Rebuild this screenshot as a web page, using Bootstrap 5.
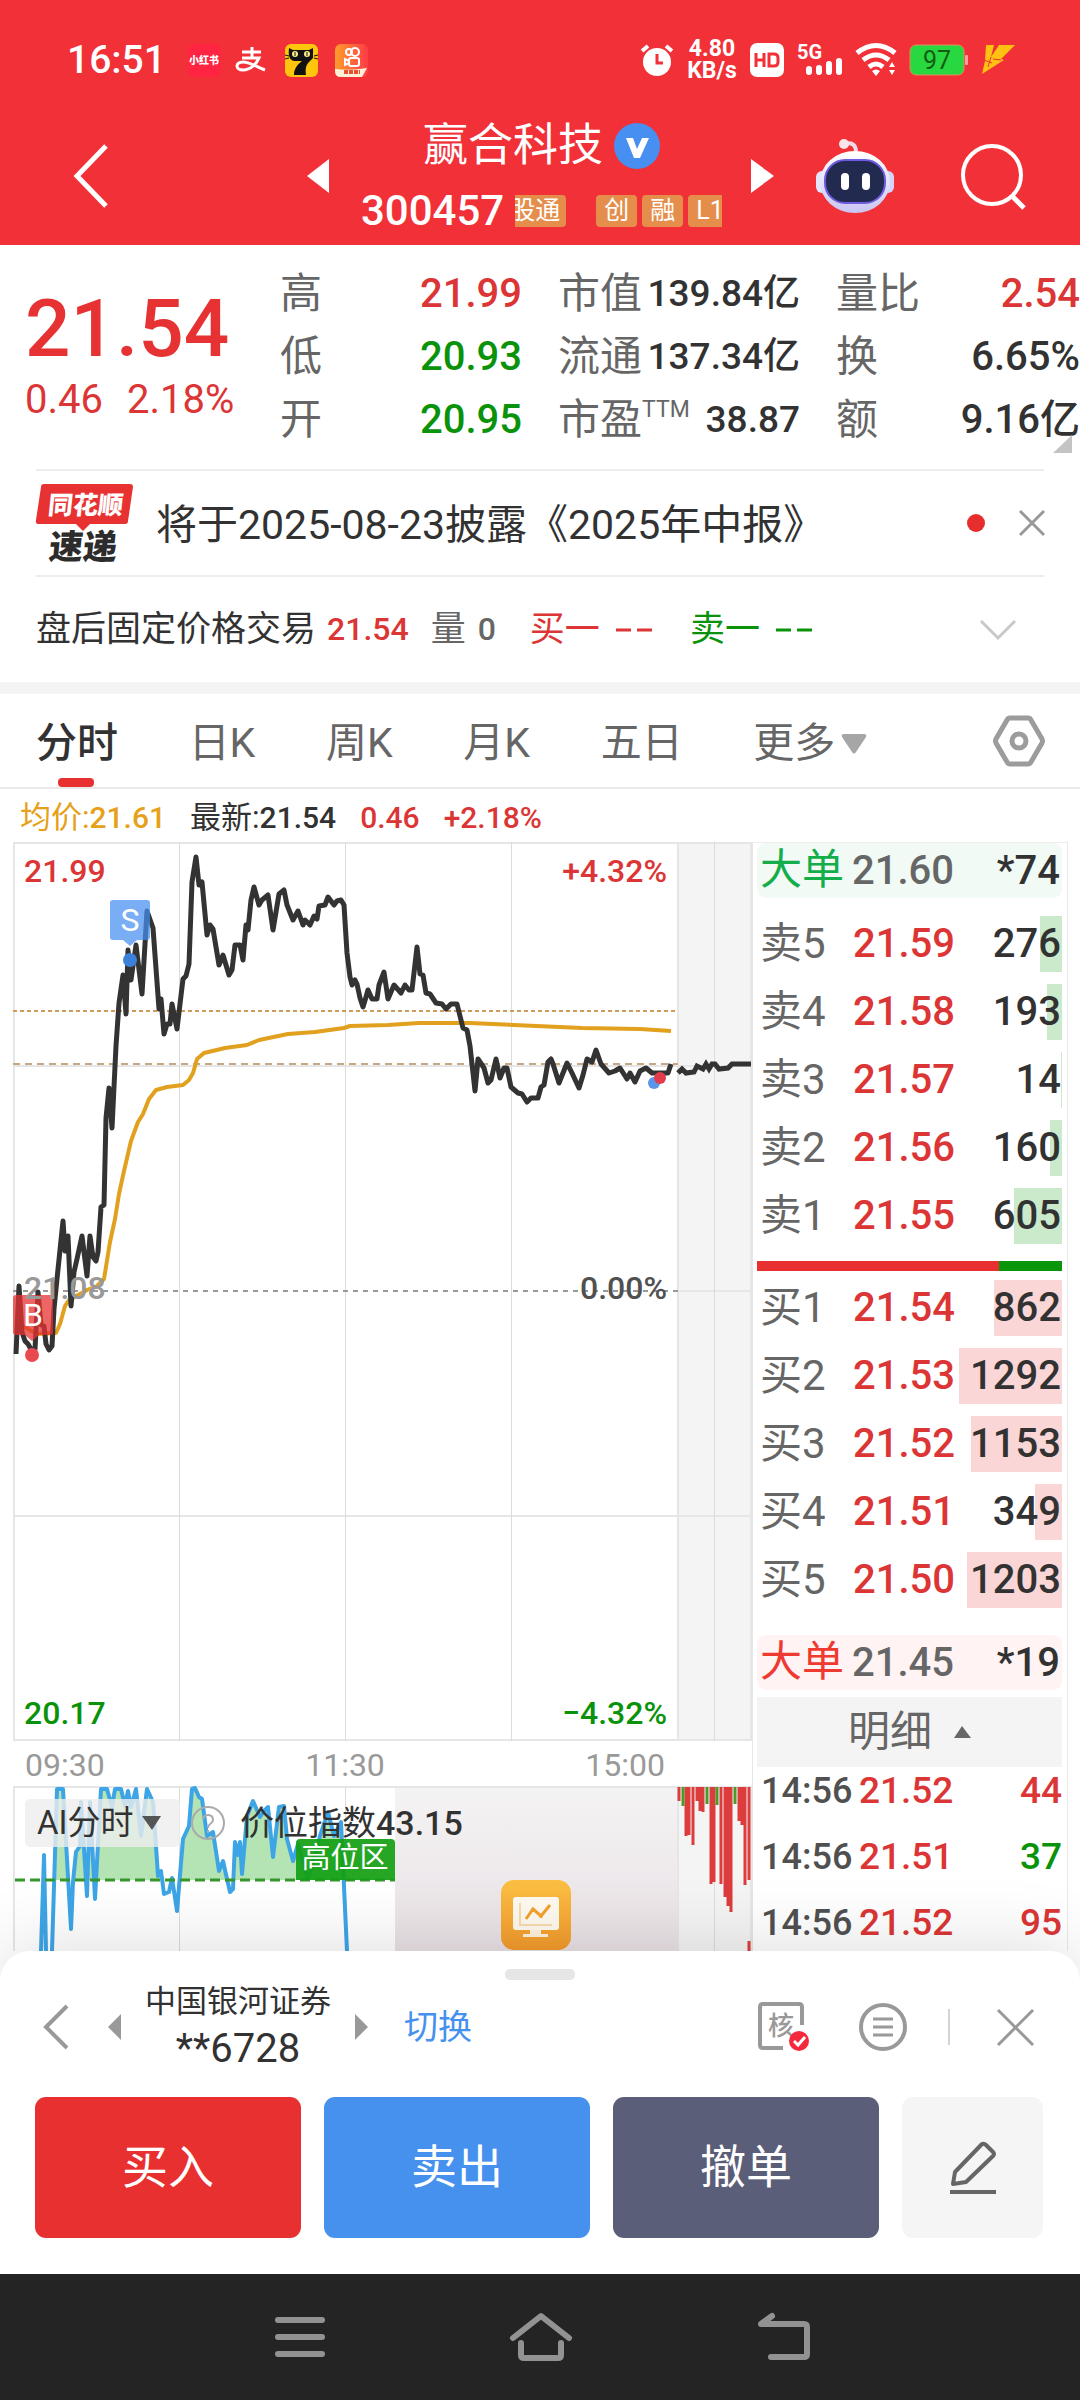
<!DOCTYPE html>
<html lang="zh-CN">
<head>
<meta charset="utf-8">
<meta name="viewport" content="width=device-width, initial-scale=1">
<title>赢合科技 300457</title>
<link href="https://cdn.jsdelivr.net/npm/bootstrap@5.3.0/dist/css/bootstrap.min.css" rel="stylesheet">
<script src="https://cdn.jsdelivr.net/npm/bootstrap@5.3.0/dist/js/bootstrap.bundle.min.js"></script>
<style>
:root{--up:#dc3535;--down:#0a930a;--ink:#323232;--soft:#666;--line:#e9e9e9}
body{font-family:Roboto,"Noto Sans CJK SC",sans-serif;color:var(--ink);background:#fff;line-height:1.2}
svg{display:block;flex:none;overflow:visible}
svg.fit{overflow:hidden}
button{border:0;background:none;padding:0;color:inherit;font:inherit;line-height:inherit}
a{text-decoration:none;color:inherit}
.up{color:var(--up)}.down{color:var(--down)}.soft{color:var(--soft)}.ink{color:var(--ink)}
.topbar{background:#f23037;color:#fff}
.status{height:116px;padding:4px 65px 0 67px;gap:13px}
.clock{font-size:39px;font-weight:500;margin-right:9px}
.rate{font-size:23px;font-weight:700;line-height:22px;text-align:center;width:50px}
.titlebar{height:129px;padding:0 53px 10px 73px}
.stock{width:361px;margin:0 29px 0 32px}
.stock h1{font-size:45px;line-height:50px;font-weight:400;margin:0;gap:11px}
.stock-code{font-size:42px;font-weight:500;line-height:40px}
.code-row{margin-top:20px}
.tags{height:32px;overflow:hidden;gap:5px;width:208px;margin-left:11px}
.tag{background:#e58e4c;border-radius:4px;font-size:25px;line-height:32px;padding:0 8px;flex:none}
.tag-cut{width:51px;overflow:hidden;direction:rtl;padding:0 6px 0 0;margin-right:25px;white-space:nowrap;border-radius:0 4px 4px 0}
.quote{height:224px;padding:24px 0 0 25px;font-size:42px}
.price{font-size:80px;font-weight:500;line-height:84px;color:#e63232;margin-top:18px}
.chg{font-size:40px;line-height:46px;gap:24px;margin-top:6px}
.qgrid{row-gap:13px;line-height:50px}
.qv{font-size:40px;font-weight:500}
.qv-s{font-size:37px;font-weight:500}
.ttm{font-size:23px;line-height:30px}
.rule{margin:0 36px;border-top:2px solid #ededed}
.news{height:104px;padding:0 35px}
.news a{font-size:41px;padding-top:6px}
.fixed-row{height:105px;padding:0 63px 0 36px;font-size:35px}
.fixed-row .num{font-size:32px;font-weight:500}
.band{height:12px;background:#f4f4f4}
.period{height:95px;border-bottom:2px solid #e9e9e9;padding:0 34px 0 36px;font-size:41px;color:var(--soft)}
.period a{padding-top:6px}
.period .cur{color:var(--ink);font-weight:500;position:relative}
.period .cur::after{content:"";position:absolute;left:22px;bottom:-19px;width:36px;height:9px;border-radius:4px;background:#e83030}
.legend-row{height:53px;padding:4px 20px 0;font-size:31px;gap:24px}
.legend-row b{font-weight:500;font-size:30px}
.market{padding-bottom:30px}
.plot{flex:0 0 752px;flex-basis:69.63%;padding-left:13px}
.plot svg.fit{width:100%;height:auto}
.axis{height:45px;padding:4px 87px 0 12px;font-size:32px;color:#999}
.index-bar{position:absolute;left:12px;top:13px;gap:11px}
.ai{background:rgba(238,238,238,.8);border-radius:5px;height:48px;padding:0 12px;font-size:33px;gap:8px;width:155px}
.idx{font-size:34px;margin-left:4px}
.idx b{font-weight:500}
.book{border-left:1px solid #e6e6e6;border-right:1px solid #e9e9e9;border-top:1px solid #eee;padding:0 5px 0 4px;margin-right:12px;font-size:42px}
.big{height:55px;border-radius:9px;padding:0 2px 0 3px}
.n{font-size:40px;font-weight:500}
.book table{width:100%;table-layout:fixed}
.book tr.lv{height:68px;background:linear-gradient(to left,var(--c) var(--w),transparent 0) center/100% 56px no-repeat}
.book th{font-weight:400;color:var(--soft);width:95px;padding:0 0 0 3px}
.book td,.book th{line-height:50px}
.book .pr{width:105px}
.asks{--c:#cbeacb;margin-top:12px}.bids{--c:#fad6d6;margin-top:3px}
.ratio{height:10px;background:#0a960a;margin-top:11px}
.ratio div{height:10px;background:#e83030}
.detail-btn{height:70px;background:#f4f4f4;color:var(--soft);width:100%;gap:22px;margin-top:7px}
.ticks td{line-height:48px!important;padding:0 0 18px;font-weight:500;font-size:37px}
.ticks tr:last-child td{padding-bottom:0}
.ticks .tm{color:#505050;width:102px;font-size:36px}
.sheet{margin-top:-30px;background:#fff;border-radius:30px 30px 0 0;box-shadow:0 -6px 70px rgba(0,0,0,.13);position:relative;height:323px;padding-top:18px}
.grip{width:70px;height:11px;border-radius:5px;background:#e6e6e6;margin:0 auto}
.acct{height:94px;padding:0 46px 0 43px}
.acct-name{font-size:31px;line-height:44px;text-align:center}
.acct-name b{display:block;font-size:40px;font-weight:400;line-height:50px}
.trade{gap:23px;padding:0 37px 0 35px;margin-top:23px}
.trade button{height:141px;border-radius:11px;font-size:46px;color:#fff;flex:266 1 0}
.trade .edit{flex:141 1 0;background:#f5f5f5}
.sysnav{height:126px;background:#242424;position:relative;gap:184px;padding-left:5px}
</style>
</head>
<body class="d-flex flex-column min-vh-100">
<header class="topbar">
  <div class="status d-flex align-items-center">
    <span class="clock">16:51</span>
    <svg width="33" height="33" viewBox="0 0 33 33"><rect width="33" height="33" rx="7" fill="#ff2442"/><text x="16" y="20" font-size="10" font-weight="900" fill="#fff" text-anchor="middle">小红书</text></svg>
    <svg width="34" height="34" viewBox="0 0 34 34" fill="none" stroke="#fff"><path d="M8 9h19M18 4v11M8 15h17C23 20 17 27 9 27 1 27 1 19 9 19c7 0 14 5 22 8" stroke-width="3"/></svg>
    <svg width="33" height="33" viewBox="0 0 33 33" class="ms-1"><rect width="33" height="33" rx="6" fill="#fdc50b"/><path d="M4 4l4 2h16l4-2v10l-4 4c-3 3-4 7-3 13H9c0-6 3-10 8-14H9c-4-1-6-4-5-13z" fill="#111"/><circle cx="10" cy="10" r="3" fill="#fdec8a"/><circle cx="22" cy="10" r="3" fill="#fdec8a"/><path d="M10 8v4M22 8v4M0 11l4 1M0 15l4-1M33 11l-4 1M33 15l-4-1" stroke="#111" stroke-width="1"/></svg>
    <svg width="33" height="33" viewBox="0 0 33 33" class="ms-1"><defs><linearGradient id="ks" x2="1"><stop stop-color="#ff9d2b"/><stop offset="1" stop-color="#ff3b47"/></linearGradient></defs><rect width="33" height="33" rx="6" fill="url(#ks)"/><g fill="none" stroke="#fff" stroke-width="2"><circle cx="14" cy="8" r="3"/><circle cx="20" cy="8" r="4"/><rect x="14" y="14" width="10" height="8" rx="2"/><path d="M14 17l-4-2v6l4-2"/></g><path d="M0 25q16 2 32-1l-5 9H6q-6 0-6-6z" fill="#fff0d8"/><path d="M9 28h16" stroke="#e8502f" stroke-width="4" stroke-dasharray="4 1"/></svg>
    <svg class="ms-auto" width="34" height="34" viewBox="0 0 34 34"><circle cx="17" cy="19" r="14" fill="#fff"/><path d="M2 8l6-5M32 8l-6-5" stroke="#fff" stroke-width="4"/><path d="M17 11v9h6" fill="none" stroke="#f23037" stroke-width="3"/></svg>
    <span class="rate">4.80<br>KB/s</span>
    <svg width="34" height="34" viewBox="0 0 34 34"><rect width="34" height="34" rx="7" fill="#fff"/><path d="M6 10v14M14 10v14M6 17h8M19 11h5q4 0 4 4v4q0 4-4 4h-5z" fill="none" stroke="#f23037" stroke-width="3"/></svg>
    <svg width="46" height="34" viewBox="0 0 46 34"><text x="0" y="16" font-size="20" font-weight="700" fill="#fff">5G</text><path d="M12 29v-3M22 29v-4M32 29v-8M42 29V18" stroke="#fff" stroke-width="6" stroke-linecap="round"/></svg>
    <svg width="40" height="34" viewBox="0 0 40 34" fill="none" stroke="#fff" stroke-width="5"><path d="M1 10q19-15 38 0M7 17q13-10 26 0M13 24q7-6 14 0"/><path d="M20 33l-4-5q4-3 8 0z" fill="#fff" stroke="none"/><path d="M33 24l3-5 3 5zM33 27l3 5 3-5z" fill="#fff" stroke="none"/></svg>
    <svg width="59" height="32" viewBox="0 0 59 32"><rect x="1" y="1" width="54" height="30" rx="6" fill="#28d840" stroke="#e58a5a"/><rect x="56" y="11" width="3" height="10" rx="1" fill="#f7a0a0"/><text x="28" y="25" font-size="25" text-anchor="middle" fill="#145c14">97</text></svg>
    <svg width="34" height="30" viewBox="0 0 34 30"><path d="M5 0h8l-3 12 8-12h16L20 14l3 1L1 29l3-13z" fill="#ffc212"/><path d="M3 15l8 3M10 12l-3 10M12 14l8 1" stroke="#f23037" stroke-width="1"/></svg>
  </div>
  <div class="titlebar d-flex align-items-center">
    <button aria-label="返回"><svg width="36" height="64" viewBox="0 0 36 64"><path d="M33 2L4 32l29 30" fill="none" stroke="#fff" stroke-width="5"/></svg></button>
    <button class="ms-auto" aria-label="上一只"><svg width="22" height="34"><path d="M22 0v34L0 17z" fill="#fff"/></svg></button>
    <div class="stock">
      <h1 class="d-flex align-items-center justify-content-center">赢合科技<svg width="46" height="46" viewBox="0 0 46 46"><circle cx="23" cy="23" r="23" fill="#478ff0"/><path d="M12 15h7l4 11 5-11h7L26 35h-6z" fill="#fff"/></svg></h1>
      <div class="code-row d-flex align-items-center">
        <span class="stock-code">300457</span>
        <div class="tags d-flex"><span class="tag tag-cut">股通</span><span class="tag">创</span><span class="tag">融</span><span class="tag">L1</span></div>
      </div>
    </div>
    <button aria-label="下一只"><svg width="23" height="34"><path d="M0 0v34l23-17z" fill="#fff"/></svg></button>
    <button aria-label="智能助手" style="margin-left:42px"><svg width="78" height="74" viewBox="0 0 78 74"><defs><linearGradient id="rb" x2="0" y2="1"><stop stop-color="#fff"/><stop offset="1" stop-color="#c9c5f2"/></linearGradient></defs><path d="M28 5q12-3 12 8" fill="none" stroke="#f3d9e6" stroke-width="4"/><circle cx="28" cy="5" r="5" fill="#fbe5ea"/><rect x="0" y="32" width="12" height="22" rx="6" fill="#e6e4fa"/><rect x="66" y="32" width="12" height="22" rx="6" fill="#d5d3f6"/><ellipse cx="39" cy="43" rx="35" ry="31" fill="url(#rb)"/><rect x="9" y="21" width="60" height="43" rx="20" fill="#222b4f" stroke="#6e5be0" stroke-width="2"/><rect x="25" y="34" width="8" height="17" rx="4" fill="#fff"/><rect x="46" y="34" width="8" height="17" rx="4" fill="#fff"/></svg></button>
    <button aria-label="搜索" style="margin-left:67px"><svg width="66" height="68" viewBox="0 0 66 68" fill="none" stroke="#fff" stroke-width="4"><circle cx="31" cy="33" r="29"/><path d="M51 54l12 12" stroke-width="5"/></svg></button>
  </div>
</header>

<section class="quote d-flex position-relative">
  <div style="width:255px">
    <div class="price">21.54</div>
    <div class="chg d-flex up"><span>0.46</span><span>2.18%</span></div>
  </div>
  <div class="qgrid d-flex flex-column" style="width:242px">
    <div class="d-flex justify-content-between"><span class="soft">高</span><span class="qv up">21.99</span></div>
    <div class="d-flex justify-content-between"><span class="soft">低</span><span class="qv down">20.93</span></div>
    <div class="d-flex justify-content-between"><span class="soft">开</span><span class="qv down">20.95</span></div>
  </div>
  <div class="qgrid d-flex flex-column" style="width:242px;margin-left:36px">
    <div class="d-flex justify-content-between"><span class="soft">市值</span><span class="qv-s">139.84亿</span></div>
    <div class="d-flex justify-content-between"><span class="soft">流通</span><span class="qv-s">137.34亿</span></div>
    <div class="d-flex"><span class="soft">市盈</span><span class="soft ttm">TTM</span><span class="qv-s ms-auto">38.87</span></div>
  </div>
  <div class="qgrid d-flex flex-column flex-fill" style="margin-left:36px">
    <div class="d-flex justify-content-between"><span class="soft">量比</span><span class="qv up">2.54</span></div>
    <div class="d-flex justify-content-between"><span class="soft">换</span><span class="qv">6.65%</span></div>
    <div class="d-flex justify-content-between"><span class="soft">额</span><span class="qv">9.16亿</span></div>
  </div>
  <svg class="position-absolute bottom-0 end-0 me-2 mb-3" width="19" height="18"><path d="M19 0v18H0z" fill="#c4c4c4"/></svg>
</section>
<div class="rule"></div>
<section class="news d-flex align-items-center">
  <svg width="98" height="80" viewBox="0 0 98 80"><path d="M9 1h86q3 0 3 3l-5 34q0 3-3 3H55l-7 7-7-7H4q-4 0-3-4L6 4q0-3 3-3z" fill="#e83232"/><g transform="skewX(-6)" font-weight="900" text-anchor="middle"><text x="53" y="31" font-size="25" fill="#fff">同花顺</text><text x="55" y="76" font-size="34" fill="#2c2c2c">速递</text></g></svg>
  <a href="#" class="ink" style="margin-left:23px">将于2025-08-23披露《2025年中报》</a>
  <svg class="ms-auto" width="18" height="18"><circle cx="9" cy="9" r="9" fill="#e62e2e"/></svg>
  <button aria-label="关闭" style="margin-left:34px"><svg width="26" height="26"><path d="M1 1l24 24M25 1L1 25" stroke="#999" stroke-width="3"/></svg></button>
</section>
<div class="rule"></div>
<section class="fixed-row d-flex align-items-center">
  <span>盘后固定价格交易</span><span class="num up" style="margin-left:11px">21.54</span>
  <span class="soft" style="margin-left:22px">量</span><span class="num soft" style="margin-left:12px">0</span>
  <span class="up" style="margin-left:34px">买一</span><svg style="margin-left:16px" width="37" height="4"><path d="M0 2h15M21 2h15" stroke="#dc3535" stroke-width="3"/></svg>
  <span class="down" style="margin-left:37px">卖一</span><svg style="margin-left:16px" width="37" height="4"><path d="M0 2h15M21 2h15" stroke="#0a930a" stroke-width="3"/></svg>
  <button class="ms-auto" aria-label="展开"><svg width="38" height="22"><path d="M2 2l17 17L36 2" fill="none" stroke="#c8c8c8" stroke-width="3"/></svg></button>
</section>
<div class="band"></div>
<nav class="period d-flex align-items-center justify-content-between">
  <a href="#" class="cur">分时</a><a href="#">日K</a><a href="#">周K</a><a href="#">月K</a><a href="#">五日</a>
  <a href="#" class="d-flex align-items-center" style="gap:6px">更多<svg width="26" height="20"><path d="M2 0h22q2 1 1 3L15 18q-2 3-4 0L1 3q-1-2 1-3z" fill="#a6a6a6"/></svg></a>
  <button aria-label="设置" style="margin-left:54px"><svg width="54" height="52" viewBox="0 0 54 52" fill="none" stroke="#9c9c9c" stroke-width="5"><path d="M18 3h18q2 0 3 2l11 19q1 2 0 4L39 47q-1 2-3 2H18q-2 0-3-2L4 28q-1-2 0-4L15 5q1-2 3-2z"/><circle cx="27" cy="26" r="7"/></svg></button>
</nav>
<div class="legend-row d-flex align-items-center">
  <span style="color:#e6a019">均价:<b>21.61</b></span><span>最新:<b>21.54</b></span><b class="up">0.46</b><b class="up">+2.18%</b>
</div>

<main class="market d-flex flex-fill">
  <div class="plot">
    <svg class="fit" viewBox="13 843 739 899" font-size="32" font-weight="500" role="img" aria-label="分时走势">
      <rect x="677" y="843" width="75" height="899" fill="#f4f4f4"/>
      <g stroke="#e6e6e6" stroke-width="2" fill="none"><path d="M13 844H752M13 1741H752M13 1067H752M13 1517H752M678 1292H752M14 843V1742M678 843V1742M751 843V1742"/><path d="M179.500 843V1742M345.500 843V1742M511.500 843V1742M714.500 843V1742" stroke-width="1" stroke="#dcdcdc"/></g>
      <path d="M13 1012H678" stroke="#cf9a5a" stroke-width="2" stroke-dasharray="4 3"/>
      <path d="M13 1065H678" stroke="#c4a987" stroke-width="2" stroke-dasharray="7 5"/>
      <path d="M13 1292H678" stroke="#999" stroke-width="2" stroke-dasharray="5 5"/>
      <polyline fill="none" stroke="#e1a01e" stroke-width="4" stroke-linejoin="round" points="20,1325 28,1330 37,1335 56,1334 60,1325 65,1307 69,1301 80,1295 87,1291 97,1287 104,1280 110,1243 115,1220 119,1195 124,1172 131,1142 138,1123 143,1115 149,1100 156,1091 167,1088 183,1086 189,1081 193,1074 197,1060 204,1054 225,1049 247,1046 259,1041 288,1035 315,1033 344,1029 350,1027 388,1026 419,1024 470,1024 514,1026 582,1029 640,1030 671,1032"/>
      <polyline fill="none" stroke="#333" stroke-width="5" stroke-linejoin="round" points="16,1355 19,1287 22,1333 25,1342 28,1345 32,1352 35,1350 38,1293 41,1326 44,1327 46,1345 49,1351 52,1347 54,1310 57,1280 63,1222 65,1252 68,1237 71,1307 74,1273 77,1260 82,1237 87,1277 90,1237 93,1258 96,1262 98,1253 101,1208 104,1206 106,1119 109,1089 112,1129 116,1047 119,1004 123,976 126,1015 128,951 131,981 136,946 142,995 147,912 153,929 159,1010 161,1000 164,1035 167,1025 170,1025 172,1005 177,1030 183,980 186,977 189,965 192,883 196,858 199,886 202,883 207,936 210,926 213,930 219,966 223,956 229,976 232,971 235,946 240,946 243,961 246,926 248,931 251,901 254,888 259,906 262,901 268,896 273,931 279,895 284,891 287,906 293,921 298,912 303,926 305,921 310,926 314,917 317,920 319,907 325,906 328,898 334,906 337,902 341,901 344,906 347,954 350,978 352,986 355,981 357,985 360,999 363,1008 366,998 368,991 372,1000 377,1000 379,986 384,973 388,1000 394,986 401,994 405,986 409,991 412,991 417,948 420,975 423,976 426,994 430,995 436,1004 442,1005 446,1010 451,1005 457,1005 460,1017 463,1029 467,1031 470,1047 475,1092 478,1060 484,1069 488,1084 491,1081 496,1060 500,1079 504,1069 507,1069 511,1088 518,1094 522,1095 527,1103 531,1099 538,1099 541,1088 544,1086 548,1063 551,1060 553,1065 559,1084 567,1064 572,1074 579,1089 583,1076 587,1060 592,1063 596,1051 601,1065 609,1074 615,1072 620,1069 627,1080 630,1074 635,1083 640,1072 646,1069 652,1074 668,1074 671,1065"/>
      <polyline fill="none" stroke="#333" stroke-width="5" points="678,1074 682,1070 686,1074 694,1073 697,1067 703,1070 706,1065 709,1070 712,1065 715,1065 719,1070 728,1069 732,1065 751,1065"/>
      <path d="M113 901h34q3 0 3 3v34q0 3-3 3h-10l-7 6-7-6h-10q-3 0-3-3v-34q0-3 3-3z" fill="#478ff0" opacity=".72"/>
      <text x="130" y="932" text-anchor="middle" fill="#fff" font-weight="400">S</text><circle cx="130" cy="961" r="7" fill="#3d80d8"/>
      <circle cx="654" cy="1084" r="6" fill="#5a96e8"/><circle cx="660" cy="1079" r="6" fill="#e23c4c"/>
      <path d="M16 1296h34q3 0 3 3v34q0 3-3 3H39l-7 6-7-6h-9q-3 0-3-3v-34q0-3 3-3z" fill="#e83232" opacity=".75"/>
      <text x="24" y="1300" fill="#999">21.08</text>
      <text x="33" y="1327" text-anchor="middle" fill="#fff" font-weight="400">B</text><circle cx="32" cy="1356" r="7" fill="#e84a50"/>
      <text x="24" y="883" fill="#dc3535">21.99</text><text x="667" y="883" text-anchor="end" fill="#dc3535">+4.32%</text>
      <text x="667" y="1300" text-anchor="end" fill="#505050">0.00%</text>
      <text x="24" y="1725" fill="#0a930a">20.17</text><text x="667" y="1725" text-anchor="end" fill="#0a930a">−4.32%</text>
    </svg>
    <div class="axis d-flex align-items-center justify-content-between"><span>09:30</span><span>11:30</span><span>15:00</span></div>
    <div class="position-relative">
      <svg class="fit" viewBox="13 1787 739 165" role="img" aria-label="价位指数">
        <defs><clipPath id="hi"><path d="M13 1787H395V1881H13z"/></clipPath><linearGradient id="pk" x2="0" y2="1"><stop stop-color="#f4f3f4"/><stop offset="1" stop-color="#e9e1e5"/></linearGradient><linearGradient id="or" x2="0" y2="1"><stop stop-color="#fbc044"/><stop offset="1" stop-color="#f49a2c"/></linearGradient></defs>
        <path d="M395 1788H678V1952H395z" fill="url(#pk)"/><path d="M678 1788H752V1952H678z" fill="#f4f4f4"/>
        <path d="M13 1788H752M14 1788V1952M678 1788V1952M751 1788V1952" stroke="#e6e6e6" stroke-width="2"/><path d="M179.500 1788V1952M345.500 1788V1952M714.500 1788V1952" stroke="#dcdcdc"/>
        <path clip-path="url(#hi)" fill="#b4e3b4" d="M52 1951L57 1790 63 1790 71 1930 73 1883 76 1853 80 1847 81 1803 87 1897 90 1803 95 1900 101 1790 107 1790 112 1808 115 1790 121 1790 125 1807 128 1792 131 1808 136 1790 141 1837 147 1790 153 1803 158 1877 161 1872 164 1895 169 1893 172 1879 177 1912 183 1840 189 1827 192 1790 195 1789 199 1798 202 1800 207 1837 213 1833 219 1872 223 1862 230 1893 233 1890 235 1843 238 1856 240 1843 242 1875 247 1817 253 1802 260 1818 264 1812 268 1808 273 1858 279 1808 284 1807 287 1840 293 1862 298 1845 308 1880 315 1857 320 1837 328 1813 334 1837 341 1823 347 1951z"/>
        <path fill="none" stroke="#3da5e6" stroke-width="4" stroke-linejoin="round" d="M41 1952L44 1856 46 1952M52 1952L57 1790 63 1790 71 1930 73 1883 76 1853 80 1847 81 1803 87 1897 90 1803 95 1900 101 1790 107 1790 112 1808 115 1790 121 1790 125 1807 128 1792 131 1808 136 1790 141 1837 147 1790 153 1803 158 1877 161 1872 164 1895 169 1893 172 1879 177 1912 183 1840 189 1827 192 1790 195 1789 199 1798 202 1800 207 1837 213 1833 219 1872 223 1862 230 1893 233 1890 235 1843 238 1856 240 1843 242 1875 247 1817 253 1802 260 1818 264 1812 268 1808 273 1858 279 1808 284 1807 287 1840 293 1862 298 1845 308 1880 315 1857 320 1837 328 1813 334 1837 341 1823 347 1952"/>
        <path d="M15 1881H395" stroke="#35962a" stroke-width="3" stroke-dasharray="10 5"/>
        <path d="M296 1881v-37q0-4 4-4h91q4 0 4 4v37z" fill="#12a012" opacity=".92"/><text x="345" y="1869" font-size="29" text-anchor="middle" fill="#fff">高位区</text>
        <rect x="501" y="1881" width="70" height="70" rx="13" fill="url(#or)"/><rect x="513" y="1898" width="46" height="33" rx="3" fill="#fffaf0"/><path d="M530 1931h11v4h7v3h-25v-3h7z" fill="#fff3dc"/><path d="M520 1904v22h32" fill="none" stroke="#f8dcb0" stroke-width="2"/><path d="M526 1920l7-10 8 7 9-11" fill="none" stroke="#f5a02c" stroke-width="3"/><circle cx="533" cy="1911" r="2" fill="#f5a02c"/><circle cx="541" cy="1917" r="2" fill="#f5a02c"/>
        <path stroke="#dc3c3c" stroke-width="3" d="M679 1788V1802M686 1788V1837M689 1788V1836M693 1788V1846M697 1788V1802M700 1788V1812M703 1788V1813M711 1788V1885M714 1788V1883M721 1788V1885M725 1788V1898M728 1788V1907M731 1788V1913M739 1788V1822M742 1788V1826M745 1788V1886M749 1788V1881M749 1942V1952"/>
        <path stroke="#4a9a2a" stroke-width="3" d="M683 1788V1807M707 1788V1805M717 1788V1806M735 1788V1805"/>
      </svg>
      <div class="index-bar d-flex align-items-center">
        <button class="ai d-flex align-items-center">AI分时<svg width="19" height="14"><path d="M0 0h19l-9 14z" fill="#555"/></svg></button>
        <svg width="34" height="34" viewBox="0 0 34 34" fill="none" stroke="#aaa" stroke-width="2"><circle cx="17" cy="17" r="16"/><path d="M12 14q0-5 5-5t5 5c0 4-5 3-5 8M17 24v3"/></svg>
        <span class="idx">价位指数<b>43.15</b></span>
      </div>
    </div>
  </div>

  <aside class="book flex-fill">
    <div class="big d-flex align-items-center" style="background:#f1faf5"><span style="color:#13ae4b">大单</span><span class="n soft" style="margin-left:8px">21.60</span><span class="n ms-auto">*74</span></div>
    <div class="asks"><table>
      <tr class="lv" style="--w:7.2%"><th>卖5</th><td class="n up pr">21.59</td><td class="n text-end">276</td></tr>
      <tr class="lv" style="--w:5%"><th>卖4</th><td class="n up">21.58</td><td class="n text-end">193</td></tr>
      <tr class="lv" style="--w:.4%"><th>卖3</th><td class="n up">21.57</td><td class="n text-end">14</td></tr>
      <tr class="lv" style="--w:4%"><th>卖2</th><td class="n up">21.56</td><td class="n text-end">160</td></tr>
      <tr class="lv" style="--w:15.8%"><th>卖1</th><td class="n up">21.55</td><td class="n text-end">605</td></tr>
    </table></div>
    <div class="ratio"><div style="width:79.5%"></div></div>
    <div class="bids"><table>
      <tr class="lv" style="--w:22.3%"><th>买1</th><td class="n up pr">21.54</td><td class="n text-end">862</td></tr>
      <tr class="lv" style="--w:33.8%"><th>买2</th><td class="n up">21.53</td><td class="n text-end">1292</td></tr>
      <tr class="lv" style="--w:29.9%"><th>买3</th><td class="n up">21.52</td><td class="n text-end">1153</td></tr>
      <tr class="lv" style="--w:8.9%"><th>买4</th><td class="n up">21.51</td><td class="n text-end">349</td></tr>
      <tr class="lv" style="--w:31.2%"><th>买5</th><td class="n up">21.50</td><td class="n text-end">1203</td></tr>
    </table></div>
    <div class="big d-flex align-items-center" style="background:#fff3f3;margin-top:21px"><span style="color:#ee3a30">大单</span><span class="n soft" style="margin-left:8px">21.45</span><span class="n ms-auto">*19</span></div>
    <button class="detail-btn d-flex align-items-center justify-content-center">明细<svg width="17" height="12"><path d="M0 12h17L8 0z" fill="#666"/></svg></button>
    <table class="ticks">
      <tr><td class="ps-1 tm">14:56</td><td class="up pr">21.52</td><td class="up text-end">44</td></tr>
      <tr><td class="ps-1 tm">14:56</td><td class="up">21.51</td><td class="down text-end">37</td></tr>
      <tr><td class="ps-1 tm">14:56</td><td class="up">21.52</td><td class="up text-end">95</td></tr>
    </table>
  </aside>
</main>

<section class="sheet">
  <div class="grip"></div>
  <div class="acct d-flex align-items-center">
    <button aria-label="返回"><svg width="26" height="46"><path d="M24 2L3 23l21 21" fill="none" stroke="#999" stroke-width="4"/></svg></button>
    <button aria-label="上一个账户" style="margin-left:39px"><svg width="13" height="26"><path d="M13 0v26L0 13z" fill="#999"/></svg></button>
    <div class="acct-name" style="margin:0 24px">中国银河证券<b>**6728</b></div>
    <button aria-label="下一个账户"><svg width="13" height="26"><path d="M0 0v26l13-13z" fill="#999"/></svg></button>
    <a href="#" style="color:#4690ee;font-size:34px;margin-left:36px">切换</a>
    <button class="ms-auto" aria-label="核对"><svg width="52" height="50" viewBox="0 0 52 50"><path d="M25 46H5q-3 0-3-3V5q0-3 3-3h36q3 0 3 3v18" fill="none" stroke="#999" stroke-width="4"/><text x="23" y="33" font-size="26" text-anchor="middle" fill="#999" font-weight="500">核</text><circle cx="41" cy="39" r="10" fill="#f5293c"/><path d="M36 39l4 4 7-8" fill="none" stroke="#fff" stroke-width="3"/></svg></button>
    <button aria-label="菜单" style="margin-left:48px"><svg width="50" height="50" fill="none" stroke="#999" stroke-width="4"><circle cx="25" cy="25" r="22"/><path d="M15 17h20M15 25h20M15 33h20" stroke-width="3"/></svg></button>
    <svg style="margin:0 47px 0 40px" width="2" height="36"><path d="M1 0v36" stroke="#d4d4d4" stroke-width="2"/></svg>
    <button aria-label="关闭"><svg width="37" height="37"><path d="M1 1l35 35M36 1L1 36" stroke="#999" stroke-width="3"/></svg></button>
  </div>
  <div class="trade d-flex">
    <button style="background:#e83030">买入</button><button style="background:#4691ee">卖出</button><button style="background:#5b5e78">撤单</button>
    <button class="edit d-flex align-items-center justify-content-center" aria-label="编辑"><svg width="48" height="54" viewBox="0 0 48 54" fill="none" stroke="#666" stroke-width="4"><path d="M4 43l2-12L33 3q2-1 4 1l7 7q2 2 0 4L17 41z" stroke-linejoin="round"/><path d="M1 51h46"/></svg></button>
  </div>
</section>
<nav class="sysnav d-flex align-items-center justify-content-center">
  <button aria-label="最近任务"><svg width="50" height="42" stroke="#929292" stroke-width="6" stroke-linecap="round"><path d="M3 4h44M3 21h44M3 38h44"/></svg></button>
  <button aria-label="主页"><svg width="64" height="50" viewBox="0 0 64 50" fill="none" stroke="#929292" stroke-width="6" stroke-linecap="round" stroke-linejoin="round"><path d="M4 26L32 4l28 22M12 31v12q0 3 3 3h34q3 0 3-3V31"/></svg></button>
  <button aria-label="返回"><svg width="54" height="48" viewBox="0 0 54 48" fill="none" stroke="#929292" stroke-width="6" stroke-linecap="round"><path d="M14 44h33q3 0 3-3V14q0-3-3-3H4l11-8" stroke-linejoin="round"/></svg></button>
</nav>
</body>
</html>
